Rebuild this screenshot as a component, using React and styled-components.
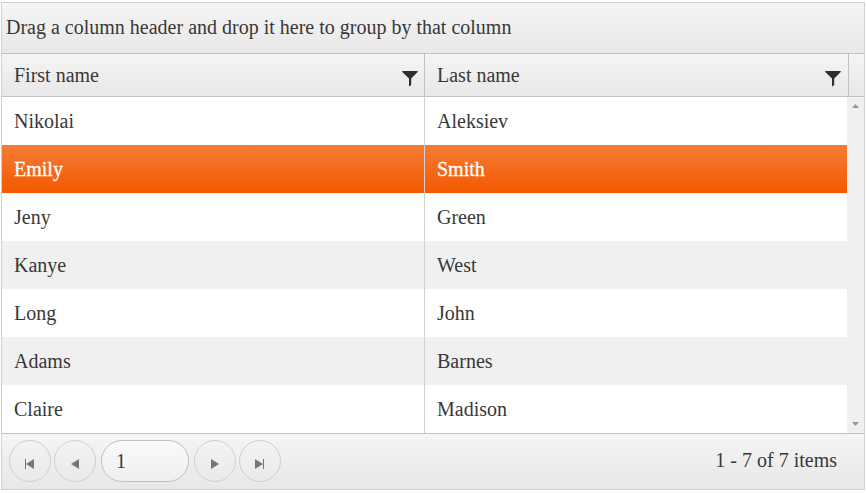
import React from 'react';
import styled, { createGlobalStyle, css } from 'styled-components';

const Global = createGlobalStyle`
  body { margin: 0; background: #fff; }
  * { box-sizing: border-box; }
`;

const chrome = css`
  background: linear-gradient(#f5f5f5, #e9e7e8);
`;

const Grid = styled.div`
  display: flex;
  flex-direction: column;
  width: 864px;
  height: 488px;
  margin: 2px 0 0 1px;
  border: 1px solid #d0d0d1;
  background: #fff;
  color: #383838;
  font: 20px/24px 'Liberation Serif', 'Times New Roman', serif;
  overflow: hidden;
`;

const GroupBar = styled.div`
  ${chrome}
  height: 51px;
  flex: none;
  padding: 12px 4px 0;
  border-bottom: 1px solid #c1c1c2;
`;

const Header = styled.div`
  ${chrome}
  display: grid;
  grid-template-columns: 423px 424px 1fr;
  height: 43px;
  flex: none;
  border-bottom: 1px solid #c1c1c2;
`;

const HeaderCell = styled.div`
  display: grid;
  grid-template-columns: 388px 16px;
  align-items: start;
  padding: 9px 0 0 12px;
  border-right: 1px solid #c1c1c2;
`;

const FilterIcon = styled.svg`
  display: block;
  width: 16px;
  height: 16px;
  margin-top: 8px;
`;

const Body = styled.div`
  display: flex;
  height: 336px;
  flex: none;
`;

const Rows = styled.div`
  width: 845px;
`;

const Row = styled.div`
  display: grid;
  grid-template-columns: 423px 1fr;
  height: 48px;
  background: ${(p) => (p.$selected ? 'linear-gradient(#f57c35, #f35800)' : p.$alt ? '#f0f0f0' : '#fff')};
  color: ${(p) => (p.$selected ? '#fff' : '#383838')};
  -webkit-text-stroke: ${(p) => (p.$selected ? '0.3px #fff' : '0')};
`;

const Cell = styled.div`
  padding: 12px 12px 0;
  &:first-child { border-right: 1px solid #d0d0d1; }
`;

const Scrollbar = styled.div`
  display: flex;
  flex-direction: column;
  justify-content: space-between;
  align-items: center;
  width: 17px;
  padding: 7px 0;
  background: #f0f0f0;
`;

const ScrollArrow = styled.svg`
  display: block;
  width: 7px;
  height: 4px;
`;

const Pager = styled.div`
  ${chrome}
  display: flex;
  flex: 1;
  align-items: flex-start;
  padding: 6px 27px 0 7px;
  border-top: 1px solid #c1c1c2;
`;

const PagerButton = styled.button`
  width: 42px;
  height: 42px;
  margin: 0 3px 0 0;
  padding: 6px 0 0;
  border: 1px solid #d0d0d1;
  border-radius: 50%;
  background: transparent;
`;

const PagerIcon = styled.svg`
  display: block;
  width: 12px;
  height: 12px;
  margin: 0 auto;
`;

const PageInput = styled.input`
  width: 88px;
  height: 42px;
  margin: 0 5px 0 2px;
  padding: 1px 14px 0;
  border: 1px solid #c1c1c2;
  border-radius: 21px;
  background: linear-gradient(#fafafa, #f0eff0);
  color: #383838;
  font: inherit;
  outline: none;
`;

const Info = styled.div`
  margin: 8px 0 0 auto;
`;

const people = [
  ['Nikolai', 'Aleksiev'],
  ['Emily', 'Smith'],
  ['Jeny', 'Green'],
  ['Kanye', 'West'],
  ['Long', 'John'],
  ['Adams', 'Barnes'],
  ['Claire', 'Madison'],
];

const icons = {
  first: 'M1 1h1v10H1zM10 1v10L2 6z',
  prev: 'M10 1v10L2 6z',
  next: 'M2 1v10L10 6z',
  last: 'M1 1v10L9 6zM9 1h1v10H9z',
};

function Filter() {
  return (
    <FilterIcon viewBox="0 0 16 16">
      <path d="M0.3 0H15.7V1L9.2 7.5V14L7 15.5V7.5L0.3 1Z" fill="#2e2e2e" />
    </FilterIcon>
  );
}

function PageNav({ kind, label }) {
  return (
    <PagerButton aria-label={label}>
      <PagerIcon viewBox="0 0 12 12"><path d={icons[kind]} fill="#777" /></PagerIcon>
    </PagerButton>
  );
}

export default function App() {
  return (
    <>
      <Global />
      <Grid>
        <GroupBar>Drag a column header and drop it here to group by that column</GroupBar>
        <Header>
          <HeaderCell>First name<Filter /></HeaderCell>
          <HeaderCell>Last name<Filter /></HeaderCell>
        </Header>
        <Body>
          <Rows>
            {people.map(([first, last], i) => (
              <Row key={first} $alt={i % 2 === 1} $selected={i === 1}>
                <Cell>{first}</Cell>
                <Cell>{last}</Cell>
              </Row>
            ))}
          </Rows>
          <Scrollbar>
            <ScrollArrow viewBox="0 0 7 4"><path d="M0 4L3.5 0L7 4z" fill="#999" /></ScrollArrow>
            <ScrollArrow viewBox="0 0 7 4"><path d="M0 0L3.5 4L7 0z" fill="#999" /></ScrollArrow>
          </Scrollbar>
        </Body>
        <Pager>
          <PageNav kind="first" label="First page" />
          <PageNav kind="prev" label="Previous page" />
          <PageInput defaultValue="1" aria-label="Page" />
          <PageNav kind="next" label="Next page" />
          <PageNav kind="last" label="Last page" />
          <Info>1 - 7 of 7 items</Info>
        </Pager>
      </Grid>
    </>
  );
}
